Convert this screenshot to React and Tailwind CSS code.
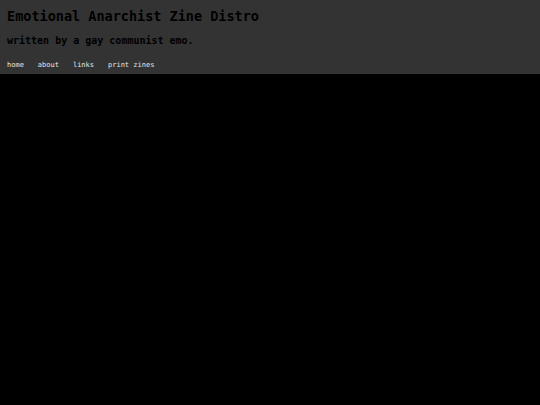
import React from 'react';

const MONO = { fontFamily: '"DejaVu Sans Mono", monospace' };

export default function App() {
  return (
    <div className="min-h-[405px] w-full bg-black" style={MONO}>
      <header className="h-[74px] bg-[#333333] px-[7px] pt-[7px]">
        <h1 className="text-[13.5px] font-bold leading-[18px] text-black">
          Emotional Anarchist Zine Distro
        </h1>
        <p className="mt-[9px] text-[10px] font-bold leading-[14px] text-black">
          written by a gay communist emo.
        </p>
        <nav className="mt-[12px] flex gap-[14px] text-[7px] leading-[10px] text-[#e5e5e5]">
          <a href="#">home</a>
          <a href="#">about</a>
          <a href="#">links</a>
          <a href="#">print zines</a>
        </nav>
      </header>
    </div>
  );
}
